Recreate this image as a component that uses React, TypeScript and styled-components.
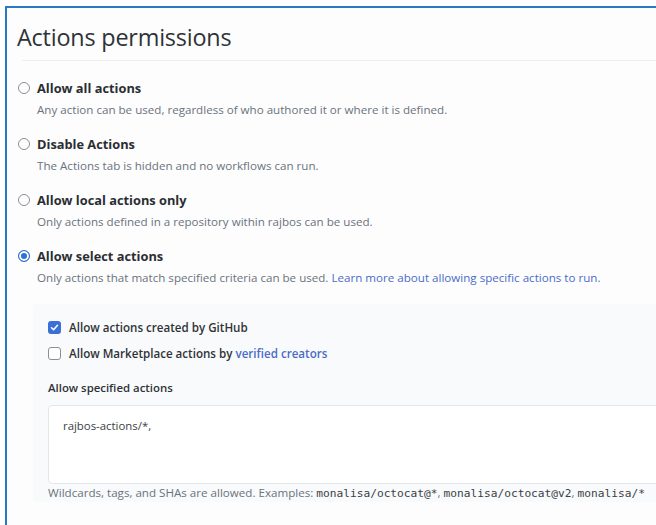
import React from "react";
import styled, { createGlobalStyle } from "styled-components";

const GlobalStyle = createGlobalStyle`
  html, body {
    margin: 0;
    padding: 0;
    background: #ffffff;
    overflow: hidden;
  }
  body {
    font-family: "Open Sans", "Noto Sans", sans-serif;
    color: #24292e;
  }
`;

const Frame = styled.div`
  margin: 6px 0 0 5px;
  width: 651px;
  height: 519px;
  overflow: hidden;
  border-top: 2px solid #2b78c4;
  border-left: 2px solid #2b78c4;
  background: #fdfdfd;
  padding: 0 0 0 10px;
  box-sizing: border-box;
`;

const Title = styled.h2`
  margin: 0;
  padding: 14px 0 0 0;
  font-size: 23.4px;
  font-weight: 400;
  color: #2f3337;
  line-height: 30px;
  letter-spacing: -0.2px;
`;

const Divider = styled.hr`
  margin: 8px 0 0 5px;
  border: 0;
  border-top: 1px solid #eceef0;
`;

const Options = styled.div`
  display: flex;
  flex-direction: column;
  gap: 17px;
  padding: 18px 0 0 1px;
`;

const Option = styled.label`
  display: grid;
  grid-template-columns: 12px auto;
  column-gap: 7px;
  row-gap: 4px;
  align-items: center;
`;

const Radio = styled.span<{ $checked?: boolean }>`
  width: 12px;
  height: 12px;
  border-radius: 50%;
  box-sizing: border-box;
  border: 1px solid ${(p) => (p.$checked ? "#2f6fd6" : "#8a8f96")};
  background: ${(p) => (p.$checked ? "#2f6fd6" : "#ffffff")};
  box-shadow: ${(p) => (p.$checked ? "inset 0 0 0 2px #ffffff" : "none")};
`;

const OptionTitle = styled.span`
  font-size: 12.8px;
  font-weight: 700;
  color: #2a2e33;
  line-height: 18px;
`;

const OptionText = styled.span`
  grid-column: 2;
  font-size: 11.6px;
  color: #6a737d;
  line-height: 17px;
`;

const Link = styled.a`
  color: #4a6cc8;
  text-decoration: none;
`;

const SubPanel = styled.div`
  margin: 18px 0 0 16px;
  padding: 12px 0 0 15px;
  background: #f9fafb;
  border-radius: 4px 0 0 0;
  height: 186px;
`;

const CheckRow = styled.label`
  display: flex;
  align-items: center;
  gap: 8px;
  height: 22px;
  margin-bottom: 4px;
  font-size: 11.6px;
  font-weight: 600;
  color: #2f3337;
`;

const Box = styled.span<{ $checked?: boolean }>`
  width: 13px;
  height: 13px;
  border-radius: 3px;
  box-sizing: border-box;
  display: inline-flex;
  align-items: center;
  justify-content: center;
  border: ${(p) => (p.$checked ? "none" : "1px solid #8a8f96")};
  background: ${(p) => (p.$checked ? "#3a6fd8" : "#ffffff")};
`;

const FieldLabel = styled.div`
  margin: 16px 0 9px 0;
  font-size: 11.4px;
  font-weight: 600;
  color: #2f3337;
  line-height: 16px;
`;

const TextArea = styled.div`
  height: 79px;
  background: #ffffff;
  border: 1px solid #e3e6ea;
  border-right: none;
  border-radius: 5px 0 0 5px;
  padding: 12px 0 0 14px;
  box-sizing: border-box;
  font-size: 11.4px;
  color: #3a3f45;
`;

const Hint = styled.div`
  margin: 1px 0 0 0;
  font-size: 11.6px;
  line-height: 16px;
  color: #6a737d;
  white-space: nowrap;
`;

const Code = styled.code`
  font-family: "DejaVu Sans Mono", "Liberation Mono", monospace;
  font-size: 11.2px;
  color: #3a3f45;
`;

const CheckMark = () => (
  <svg width="9" height="9" viewBox="0 0 12 12">
    <path d="M2 6.3 4.8 9 10 3" fill="none" stroke="#ffffff" strokeWidth="2" strokeLinecap="round" strokeLinejoin="round" />
  </svg>
);

const choices = [
  {
    title: "Allow all actions",
    text: "Any action can be used, regardless of who authored it or where it is defined.",
  },
  {
    title: "Disable Actions",
    text: "The Actions tab is hidden and no workflows can run.",
  },
  {
    title: "Allow local actions only",
    text: "Only actions defined in a repository within rajbos can be used.",
  },
];

export default function App() {
  return (
    <>
      <GlobalStyle />
      <Frame>
        <Title>Actions permissions</Title>
        <Divider />
        <Options>
          {choices.map((c) => (
            <Option key={c.title}>
              <Radio />
              <OptionTitle>{c.title}</OptionTitle>
              <OptionText>{c.text}</OptionText>
            </Option>
          ))}
          <Option>
            <Radio $checked />
            <OptionTitle>Allow select actions</OptionTitle>
            <OptionText>
              Only actions that match specified criteria can be used.{" "}
              <Link>Learn more about allowing specific actions to run.</Link>
            </OptionText>
          </Option>
        </Options>
        <SubPanel>
          <CheckRow>
            <Box $checked>
              <CheckMark />
            </Box>
            Allow actions created by GitHub
          </CheckRow>
          <CheckRow>
            <Box />
            <span>
              Allow Marketplace actions by <Link>verified creators</Link>
            </span>
          </CheckRow>
          <FieldLabel>Allow specified actions</FieldLabel>
          <TextArea>rajbos-actions/*,</TextArea>
          <Hint>
            Wildcards, tags, and SHAs are allowed. Examples: <Code>monalisa/octocat@*</Code>,{" "}
            <Code>monalisa/octocat@v2</Code>, <Code>monalisa/*</Code>
          </Hint>
        </SubPanel>
      </Frame>
    </>
  );
}
